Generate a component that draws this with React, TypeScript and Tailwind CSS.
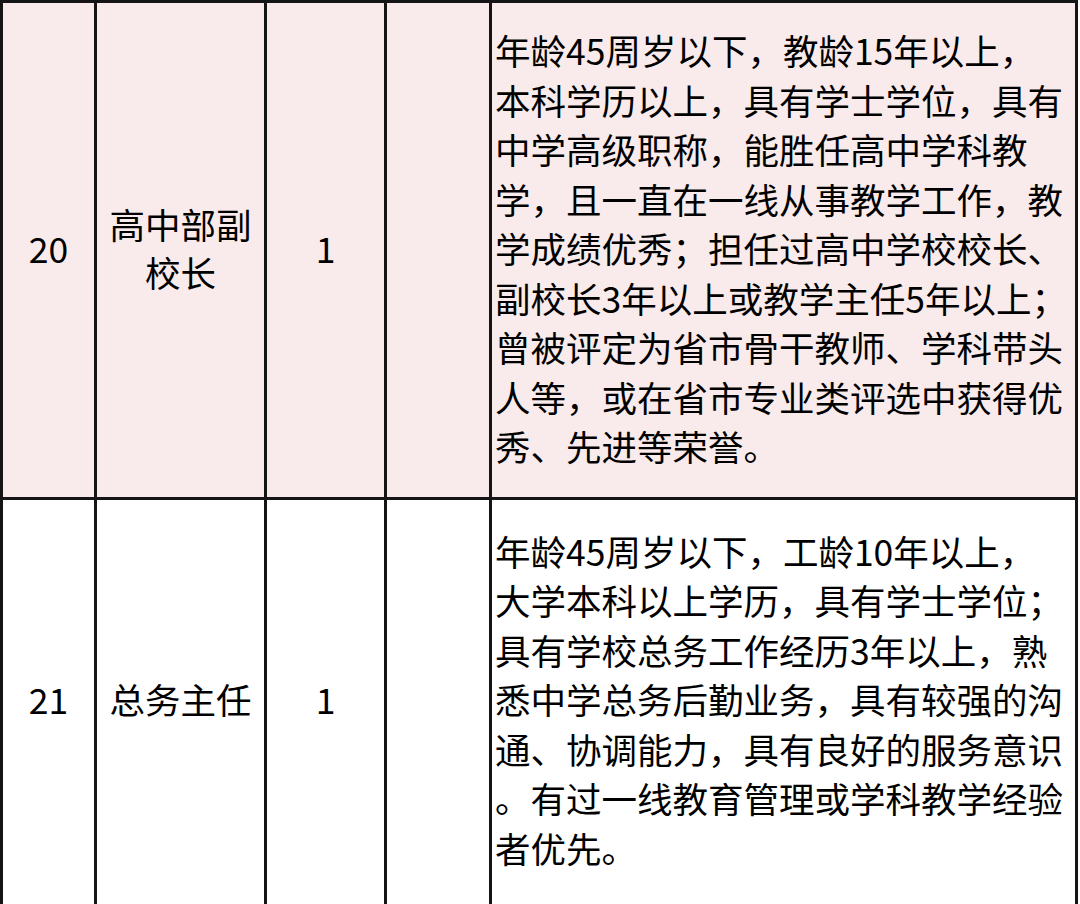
import React from 'react';

const font = { fontFamily: '"Noto Sans CJK SC", "Noto Sans", sans-serif' };

const rows = [
    {
        no: '20',
        title: ['高中部副', '校长'],
        count: '1',
        bg: 'bg-[#f9ebeb]',
        height: 'h-[497px]',
        pad: 'pb-[4px]',
        desc: [
            '年龄45周岁以下，教龄15年以上，',
            '本科学历以上，具有学士学位，具有',
            '中学高级职称，能胜任高中学科教',
            '学，且一直在一线从事教学工作，教',
            '学成绩优秀；担任过高中学校校长、',
            '副校长3年以上或教学主任5年以上；',
            '曾被评定为省市骨干教师、学科带头',
            '人等，或在省市专业类评选中获得优',
            '秀、先进等荣誉。',
        ],
    },
    {
        no: '21',
        title: ['总务主任'],
        count: '1',
        bg: 'bg-white',
        height: 'h-[413px]',
        pad: 'pb-[12px]',
        desc: [
            '年龄45周岁以下，工龄10年以上，',
            '大学本科以上学历，具有学士学位；',
            '具有学校总务工作经历3年以上，熟',
            '悉中学总务后勤业务，具有较强的沟',
            '通、协调能力，具有良好的服务意识',
            '。有过一线教育管理或学科教学经验',
            '者优先。',
        ],
    },
];

export default function App() {
    return (
        <div className="w-[1080px] h-[904px] overflow-hidden bg-white text-black" style={font}>
            <div className="w-[1078px] border-l-[3px] border-t-[3px] border-[#151515]">
                {rows.map((r) => (
                    <div key={r.no} className={`flex ${r.height} ${r.bg} border-b-[3px] border-[#151515]`}>
                        <div className={`w-[94px] shrink-0 border-r-[3px] border-[#151515] flex items-center justify-center ${r.pad} text-[35.5px] leading-[48px]`}>
                            {r.no}
                        </div>
                        <div className={`w-[170px] shrink-0 border-r-[3px] border-[#151515] flex flex-col items-center justify-center ${r.pad} text-[35.5px] leading-[48px]`}>
                            {r.title.map((t) => (
                                <span key={t} className="whitespace-nowrap">{t}</span>
                            ))}
                        </div>
                        <div className={`w-[120px] shrink-0 border-r-[3px] border-[#151515] flex items-center justify-center ${r.pad} text-[35.5px] leading-[48px]`}>
                            {r.count}
                        </div>
                        <div className="w-[105px] shrink-0 border-r-[3px] border-[#151515]" />
                        <div className={`w-[586px] shrink-0 border-r-[3px] border-[#151515] flex flex-col justify-center pl-[3px] ${r.pad} text-[35.5px] leading-[49.5px]`}>
                            {r.desc.map((line, i) => (
                                <span key={i} className="block whitespace-nowrap">{line}</span>
                            ))}
                        </div>
                    </div>
                ))}
            </div>
        </div>
    );
}
